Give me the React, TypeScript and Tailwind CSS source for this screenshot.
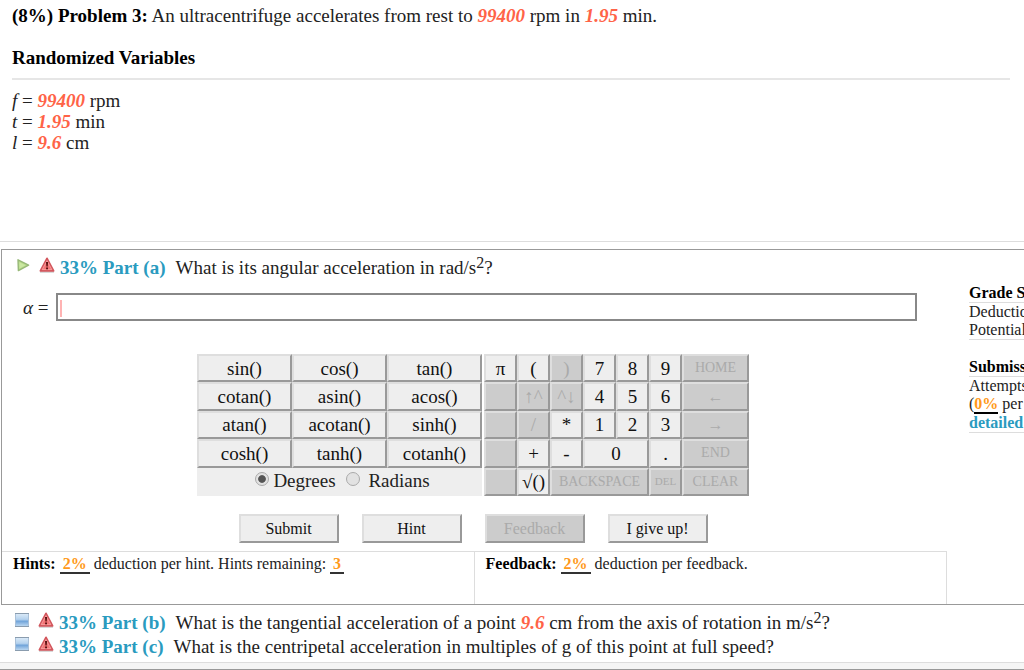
import { useState, type ReactNode } from 'react'
import clsx from 'clsx'

const FUNCTION_KEYS = [
  'sin()', 'cos()', 'tan()',
  'cotan()', 'asin()', 'acos()',
  'atan()', 'acotan()', 'sinh()',
  'cosh()', 'tanh()', 'cotanh()',
]

type Key = {
  label: string
  off?: boolean
  className?: string
}

const KEYPAD: Key[] = [
  { label: 'π' },
  { label: '(' },
  { label: ')', off: true },
  { label: '7' },
  { label: '8' },
  { label: '9' },
  { label: 'HOME', off: true, className: 'text-sm' },

  { label: '', off: true },
  { label: '↑^', off: true },
  { label: '^↓', off: true },
  { label: '4' },
  { label: '5' },
  { label: '6' },
  { label: '←', off: true, className: 'text-base' },

  { label: '', off: true },
  { label: '/', off: true },
  { label: '*' },
  { label: '1' },
  { label: '2' },
  { label: '3' },
  { label: '→', off: true, className: 'text-base' },

  { label: '', off: true },
  { label: '+' },
  { label: '-' },
  { label: '0', className: 'col-span-2' },
  { label: '.' },
  { label: 'END', off: true, className: 'text-sm' },

  { label: '', off: true },
  { label: '√()' },
  { label: 'BACKSPACE', off: true, className: 'col-span-3 text-sm' },
  { label: 'DEL', off: true, className: 'text-[11px]' },
  { label: 'CLEAR', off: true, className: 'text-sm' },
]

const BEVEL = 'border-2 border-t-[#dedede] border-l-[#dedede] border-r-[#999] border-b-[#999]'

function KeyButton({ label, off, className }: Key) {
  return (
    <button
      type="button"
      disabled={off}
      aria-label={label || 'Unused key'}
      className={clsx(
        BEVEL,
        'flex min-w-0 items-center justify-center whitespace-nowrap',
        off ? 'bg-[#ccc] text-[#aaa]' : 'bg-[#eee] text-[#111]',
        className ?? '',
      )}
    >
      {label}
    </button>
  )
}

function ActionButton({ children, off }: { children: ReactNode; off?: boolean }) {
  return (
    <button
      type="button"
      disabled={off}
      className={clsx(
        BEVEL,
        'h-[29px] w-[100px] text-base',
        off ? 'bg-[#ccc] text-[#aaa]' : 'bg-[#eee] text-[#111]',
      )}
    >
      {children}
    </button>
  )
}

function Value({ children }: { children: ReactNode }) {
  return <b className="font-bold text-[#ff6347] italic">{children}</b>
}

function Percent({ children }: { children: ReactNode }) {
  return (
    <b className="inline-block border-b-2 border-[#333] px-[3px] leading-[17px] text-[#ff9a1a]">{children}</b>
  )
}

function AlertIcon() {
  return (
    <svg width="16" height="16" viewBox="0 0 16 16" className="shrink-0" aria-hidden="true">
      <path d="M1 15h14" stroke="#c9c9c9" strokeWidth="1.4" />
      <path d="M8 1.4 14.6 13.8H1.4Z" fill="#f37476" stroke="#d2555c" strokeWidth="1.8" strokeLinejoin="round" />
      <path d="M8 3.6 12.8 12.6H3.2Z" fill="none" stroke="#fbaeac" strokeWidth=".7" />
      <path d="M7 5h2.1l-.4 4.6H7.4Z" fill="#5a1010" />
      <rect x="7.1" y="10.5" width="1.9" height="1.8" fill="#5a1010" />
    </svg>
  )
}

function PlayIcon() {
  return (
    <svg width="16" height="16" viewBox="0 0 16 16" className="shrink-0" aria-hidden="true">
      <path d="M3 2.8 13.6 8.2 3.4 13.6Z" fill="#b9dc8b" stroke="#97b878" strokeWidth="1.4" strokeLinejoin="round" />
      <path d="M4.4 5.2 10.4 8.2 4.6 11.4Z" fill="#cbe8a2" />
    </svg>
  )
}

function SquareIcon() {
  return (
    <svg width="16" height="16" viewBox="0 0 16 16" className="shrink-0" aria-hidden="true">
      <defs>
        <linearGradient id="square" x1="0" y1="0" x2="0" y2="1">
          <stop offset="0" stopColor="#dcebf8" />
          <stop offset=".45" stopColor="#b5d2ee" />
          <stop offset=".6" stopColor="#72a5da" />
          <stop offset="1" stopColor="#c2dcf3" />
        </linearGradient>
      </defs>
      <rect x="1.5" y="1.5" width="13" height="13" fill="url(#square)" stroke="#a9c0d8" />
      <path d="M1 14.5h14M1 1.5h14" stroke="#8a9cae" />
    </svg>
  )
}

function PartRow({ icon, part, children }: { icon: ReactNode; part: string; children: ReactNode }) {
  return (
    <div className="flex h-6 items-center">
      <span className="flex gap-2 pb-[5px]">
        {icon}
        <AlertIcon />
      </span>
      <b className="ml-[5px] whitespace-pre text-[#2a9bbf]">{`33% Part (${part})`}</b>
      <span className="ml-[10px] whitespace-nowrap">{children}</span>
    </div>
  )
}

function Squared() {
  return <sup className="top-[-6px] text-[16px]">2</sup>
}

function AngleRadio({ label, checked, onChange }: { label: string; checked: boolean; onChange: () => void }) {
  return (
    <label className="flex items-center gap-1 whitespace-pre">
      <input
        type="radio"
        name="angle"
        checked={checked}
        onChange={onChange}
        className="mb-1 size-[14px] appearance-none rounded-full border border-[#aaa] bg-[#e2e2e2] bg-radial checked:from-[#555] checked:from-40% checked:to-[#e2e2e2] checked:to-50%"
      />
      {label}
    </label>
  )
}

export default function App() {
  const [answer, setAnswer] = useState('')
  const [unit, setUnit] = useState('Degrees')

  return (
    <div className="overflow-hidden bg-white font-['Liberation_Serif',serif] text-[19px] leading-[21px] text-[#222]">
      <section className="pt-[5px] pr-[14px] pl-3">
        <p>
          <b className="text-black">(8%) Problem 3:</b> An ultracentrifuge accelerates from rest to{' '}
          <Value>99400</Value> rpm in <Value>1.95</Value> min.
        </p>
        <h2 className="mt-[21px] font-bold text-black">Randomized Variables</h2>
        <hr className="mt-[10px] border-t-2 border-[#e6e6e6]" />
        <div className="mt-[10px] h-[151px]">
          <p><i>f</i> = <Value>99400</Value> rpm</p>
          <p><i>t</i> = <Value>1.95</Value> min</p>
          <p><i>l</i> = <Value>9.6</Value> cm</p>
        </div>
      </section>

      <div className="border-t border-[#ddd] pt-[7px] pl-px">
        <section className="flex border border-r-0 border-[#999]">
          <main className="min-w-0 flex-1">
            <div className="pt-[5px] pl-[13px]">
              <PartRow icon={<PlayIcon />} part="a">
                What is its angular acceleration in rad/s<Squared />?
              </PartRow>
            </div>

            <div className="mt-[14px] flex items-center pr-[30px] pl-[21px]">
              <label htmlFor="alpha" className="w-[33px]">
                <i>α</i> =
              </label>
              <div className="relative flex-1">
                <input
                  id="alpha"
                  type="text"
                  value={answer}
                  onChange={(e) => setAnswer(e.target.value)}
                  className="block h-7 w-full border-2 border-[#888] bg-white px-2 outline-none"
                />
                <span className="pointer-events-none absolute top-[7px] left-1 h-[17px] w-[2px] bg-[#ffb3b3]" />
              </div>
            </div>

            <div className="mt-[33px] flex justify-center gap-[2px] pr-[3px]">
              <div className="grid h-[142px] w-[285px] grid-cols-3 grid-rows-5 bg-[#eee]">
                {FUNCTION_KEYS.map((label) => (
                  <KeyButton key={label} label={label} />
                ))}
                <div className="col-span-3 flex items-center justify-center gap-[10px] pb-[2px] pl-[6px]">
                  <AngleRadio label="Degrees" checked={unit === 'Degrees'} onChange={() => setUnit('Degrees')} />
                  <AngleRadio label=" Radians" checked={unit === 'Radians'} onChange={() => setUnit('Radians')} />
                </div>
              </div>
              <div className="grid h-[142px] w-[265px] grid-cols-[repeat(6,33px)_1fr] grid-rows-5">
                {KEYPAD.map((key, i) => (
                  <KeyButton key={i} {...key} />
                ))}
              </div>
            </div>

            <div className="mt-[18px] flex justify-center gap-[23px] pr-[3px]">
              <ActionButton>Submit</ActionButton>
              <ActionButton>Hint</ActionButton>
              <ActionButton off>Feedback</ActionButton>
              <ActionButton>I give up!</ActionButton>
            </div>

            <div className="mt-2 grid h-[53px] grid-cols-2 border-t border-[#ddd] text-base">
              <p className="border-r border-[#ddd] pl-[11px]">
                <b className="text-black">Hints:</b> <Percent>2%</Percent> deduction per hint. Hints remaining:{' '}
                <Percent>3</Percent>
              </p>
              <p className="border-r border-[#ddd] pl-[11px]">
                <b className="text-black">Feedback:</b> <Percent>2%</Percent> deduction per feedback.
              </p>
            </div>
          </main>

          <aside className="ml-[22px] w-[55px] overflow-hidden pt-[34px] text-base leading-[18px] whitespace-nowrap">
            <h3 className="border-b border-[#ddd] font-bold text-black">Grade Summary</h3>
            <p>Deductions</p>
            <p className="border-b border-[#ddd]">Potential</p>
            <h3 className="mt-[18px] border-b border-[#ddd] font-bold text-black">Submissions</h3>
            <p>Attempts</p>
            <p>
              (<b className="inline-block border-b-2 border-black leading-4 text-[#ff9a1a]">0%</b> per attempt)
            </p>
            <p className="border-b border-[#ddd]">
              <a href="#detailed" className="font-bold text-[#2a9bbf]">detailed view</a>
            </p>
          </aside>
        </section>

        <section className="pt-[5px] pb-[4px] pl-[13px]">
          <PartRow icon={<SquareIcon />} part="b">
            What is the tangential acceleration of a point <Value>9.6</Value> cm from the axis of rotation in m/s
            <Squared />?
          </PartRow>
          <PartRow icon={<SquareIcon />} part="c">
            What is the centripetal acceleration in multiples of g of this point at full speed?
          </PartRow>
        </section>
      </div>

      <footer className="h-2 border-t border-b border-t-[#ddd] border-b-[#999] bg-[#f5f5f5]" />
    </div>
  )
}
